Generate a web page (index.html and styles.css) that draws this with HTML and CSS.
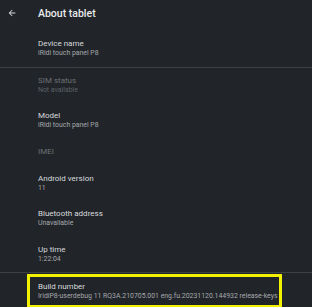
FILE: index.html
```html
<!DOCTYPE html>
<html>
<head>
  <meta name="viewport" content="width=device-width, initial-scale=1">
  <link rel="stylesheet" href="styles.css">
  <title>About tablet</title>
</head>
<body>

<div class="screen">
  <div class="toolbar">
    <svg class="backIcon" width="10" height="10" viewBox="0 0 24 24">
      <path d="M20 11H7.83l5.59-5.59L12 4l-8 8 8 8 1.41-1.41L7.83 13H20v-2z" fill="#d8dadd"/>
    </svg>
    <div class="toolbarTitle">About tablet</div>
  </div>

  <div class="item">
    <div class="itemTitle">Device name</div>
    <div class="itemValue">iRidi touch panel P8</div>
  </div>
  <div class="divider"></div>

  <div class="item disabled">
    <div class="itemTitle">SIM status</div>
    <div class="itemValue">Not available</div>
  </div>
  <div class="item">
    <div class="itemTitle">Model</div>
    <div class="itemValue">iRidi touch panel P8</div>
  </div>
  <div class="item single disabled">
    <div class="itemTitle">IMEI</div>
  </div>
  <div class="item">
    <div class="itemTitle">Android version</div>
    <div class="itemValue">11</div>
  </div>
  <div class="item">
    <div class="itemTitle">Bluetooth address</div>
    <div class="itemValue">Unavailable</div>
  </div>
  <div class="item">
    <div class="itemTitle">Up time</div>
    <div class="itemValue">1:22:04</div>
  </div>
  <div class="divider"></div>

  <div class="highlight">
    <div class="itemTitle">Build number</div>
    <div class="itemValue">IridiP8-userdebug 11 RQ3A.210705.001 eng.fu.20231120.144932 release-keys</div>
  </div>
</div>

</body>
</html>
```

FILE: styles.css
```css
html, body {
  margin: 0;
  height: 100%;
}

body {
  background-color: #212529;
  font-family: Roboto, 'Noto Sans', sans-serif;
  overflow: hidden;
}

.screen {
  display: flex;
  flex-direction: column;
}

.toolbar {
  height: 31px;
  display: flex;
  align-items: center;
  padding-bottom: 5px;
  box-sizing: border-box;
}

.backIcon {
  margin-left: 7px;
  width: 10px;
  height: 10px;
}

.toolbarTitle {
  margin-left: 21px;
  font-size: 10.5px;
  font-weight: 500;
  color: #e8eaed;
}

.item {
  padding: 8px 0 8.5px 38px;
}

.itemTitle {
  font-size: 8px;
  line-height: 10px;
  color: #d8dade;
}

.itemValue {
  font-size: 6.9px;
  line-height: 9px;
  color: #a5a8ac;
  white-space: nowrap;
}

.disabled .itemTitle {
  color: #6c7075;
}

.disabled .itemValue {
  color: #5c6065;
}

.single {
  padding-bottom: 9px;
}

.divider {
  height: 1px;
  background-color: #3c4044;
}

.highlight {
  margin: 1px 30px 0 27px;
  border: 3px solid #f2f200;
  padding: 5px 0 4px 8px;
}
```
